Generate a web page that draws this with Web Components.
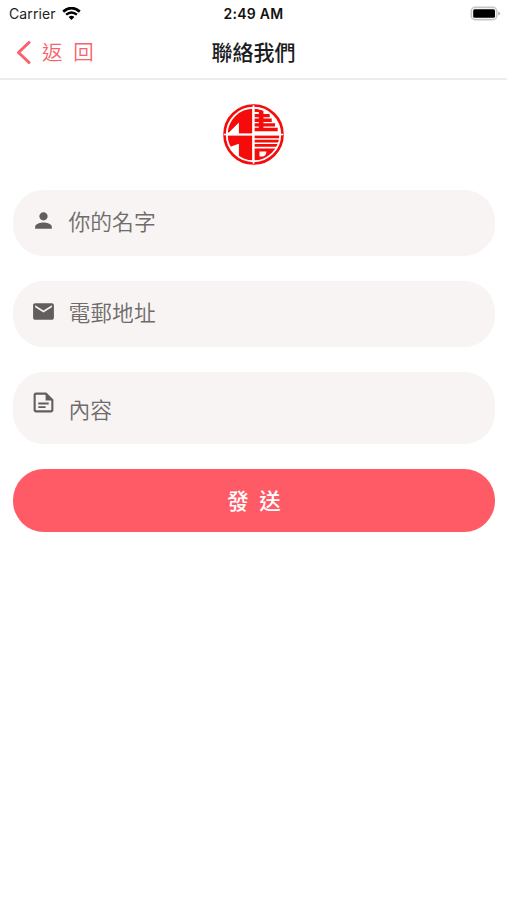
<!DOCTYPE html>
<html lang="zh-Hant">
<head>
<meta charset="utf-8">
<meta name="viewport" content="width=device-width, initial-scale=1">
<title>聯絡我們</title>
<style>
  body {
    margin: 0;
    background: #fff;
    font-family: Inter, "Noto Sans CJK TC", sans-serif;
  }
</style>
</head>
<body>
<contact-page>
  <status-bar carrier="Carrier" time="2:49 AM"></status-bar>
  <nav-bar><span slot="back">返 回</span>聯絡我們</nav-bar>
  <brand-logo></brand-logo>
  <form-field icon="person">你的名字</form-field>
  <form-field icon="mail">電郵地址</form-field>
  <form-field icon="note" multiline>內容</form-field>
  <submit-button>發 送</submit-button>
</contact-page>

<script>
class ContactPage extends HTMLElement {
  constructor() {
    super();
    this.attachShadow({ mode: "open" }).innerHTML = `
      <style>
        :host {
          display: flex;
          flex-direction: column;
          min-height: 100vh;
        }
      </style>
      <slot></slot>
    `;
  }
}

class StatusBar extends HTMLElement {
  constructor() {
    super();
    this.attachShadow({ mode: "open" }).innerHTML = `
      <style>
        :host {
          display: grid;
          grid-template-columns: 1fr auto 1fr;
          align-items: center;
          height: 27px;
          padding: 0 6px 0 9px;
          box-sizing: border-box;
          font-size: 14px;
          line-height: 27px;
          color: #222;
        }
        .left { display: flex; align-items: center; gap: 6px; }
        .carrier { letter-spacing: 0.1px; }
        .time {
          margin-right: 3px;
          font-size: 14px;
          font-weight: 600;
          color: #111;
          letter-spacing: 0.25px;
        }
        .battery { justify-self: end; }
        svg { display: block; }
      </style>
      <div class="left">
        <span class="carrier">${this.getAttribute("carrier")}</span>
        <svg width="19" height="14" viewBox="0 0 19 14" fill="none" stroke="#000">
          <path d="M1.2 4.6Q9.5-2.4 17.8 4.6" stroke-width="2.7"/>
          <path d="M4.1 7.7Q9.5 3.1 14.9 7.7" stroke-width="2.4"/>
          <path d="M6.6 10Q9.5 7.4 12.4 10L9.5 13Z" fill="#000" stroke="none"/>
        </svg>
      </div>
      <span class="time">${this.getAttribute("time")}</span>
      <svg class="battery" width="31" height="16" viewBox="0 0 31 16">
        <rect x="1.2" y="1.3" width="25.6" height="12.4" rx="4" fill="#f4f4f4" stroke="#c6c6c6" stroke-width="1.4"/>
        <rect x="3.2" y="3.2" width="21.8" height="8.6" rx="1.5" fill="#000"/>
        <path d="M28.2 5.4q2 .6 2 2.1t-2 2.1z" fill="#b4b4b4"/>
      </svg>
    `;
  }
}

class NavBar extends HTMLElement {
  constructor() {
    super();
    this.attachShadow({ mode: "open" }).innerHTML = `
      <style>
        :host {
          display: grid;
          grid-template-columns: 1fr auto 1fr;
          align-items: center;
          height: 53px;
          padding: 0 15px 0;
          box-sizing: border-box;
          border-bottom: 2px solid #ededed;
        }
        .back {
          display: flex;
          align-items: center;
          gap: 11px;
          color: #f9616b;
          font-size: 20.5px;
          line-height: 30px;
          font-weight: 350;
          word-spacing: 5px;
        }
        .title {
          font-size: 21px;
          line-height: 30px;
          font-weight: 500;
          color: #1c1c1e;
        }
        svg { display: block; }
      </style>
      <div class="back">
        <svg width="16" height="24" viewBox="0 0 16 24" fill="none" stroke="currentColor" stroke-width="3" stroke-linecap="round" stroke-linejoin="round">
          <path d="M14 1.5L3.5 11.5L14 21.5"/>
        </svg>
        <slot name="back"></slot>
      </div>
      <div class="title"><slot></slot></div>
    `;
  }
}

class BrandLogo extends HTMLElement {
  constructor() {
    super();
    this.attachShadow({ mode: "open" }).innerHTML = `
      <style>
        :host {
          display: flex;
          justify-content: center;
          padding: 24px 0 25px;
        }
        svg { display: block; }
      </style>
      <svg width="61" height="61" viewBox="30 26 184 184">
        <clipPath id="disc"><circle cx="122" cy="118" r="78"/></clipPath>
        <circle cx="122" cy="118" r="87.5" fill="#fff" stroke="#f60b0b" stroke-width="8"/>
        <g fill="#f60b0b" clip-path="url(#disc)">
          <!-- left half -->
          <path d="M118 38V115H78V82L48 112H40V38Z"/>
          <path d="M118 121V200H78V146L50 156H40V121Z"/>
          <!-- right half -->
          <path d="M125 38L152 46V106H138V50H125Z"/>
          <path d="M125 56h46v10h-46zM125 70h52v10h-52zM125 84h62v10h-62zM125 98h70v10h-70z"/>
          <path d="M125 121h76v8h-76zM125 134h74v8h-74zM125 147h70v8h-70z"/>
          <path fill-rule="evenodd" d="M125 160H190V200H125ZM140 169V184H150Q160 182 161 169Z"/>
        </g>
        <path d="M32 118H212" stroke="#fff" stroke-width="5"/>
        <path d="M122 30V206" stroke="#fff" stroke-width="5"/>
      </svg>
    `;
  }
}

const FIELD_ICONS = {
  person: `<path d="M12 12c2.21 0 4-1.79 4-4s-1.79-4-4-4-4 1.79-4 4 1.79 4 4 4zm0 2c-2.67 0-8 1.34-8 4v2h16v-2c0-2.66-5.33-4-8-4z"/>`,
  mail: `<path d="M20 4H4c-1.1 0-1.99.9-1.99 2L2 18c0 1.1.9 2 2 2h16c1.1 0 2-.9 2-2V6c0-1.1-.9-2-2-2zm0 4l-8 5-8-5V6l8 5 8-5v2z"/>`,
  note: `<path fill="none" stroke="currentColor" stroke-width="2" stroke-linejoin="round" d="M5 3.5H14.5L20.500 9.500V19Q20.500 20.500 19 20.500H5Q3.500 20.500 3.500 19V5Q3.500 3.500 5 3.500Z"/>
         <path d="M14 3.5L20.5 10H14ZM7 12h10v1.8H7zM7 15.5h7v1.8H7z"/>`,
};

class FormField extends HTMLElement {
  constructor() {
    super();
    this.attachShadow({ mode: "open" }).innerHTML = `
      <style>
        :host {
          display: flex;
          align-items: flex-start;
          gap: 12.5px;
          height: 66px;
          margin: 0 12px 25px 13px;
          padding: 17.5px 18px 0;
          box-sizing: border-box;
          border-radius: 31px;
          background: #f7f4f3;
          color: #6f6b6a;
        }
        :host([multiline]) {
          height: 72px;
        }
        svg {
          display: block;
          flex: none;
          color: #625e5d;
          fill: currentColor;
        }
        .label {
          font-size: 21.8px;
          line-height: 28px;
          font-weight: 350;
        }
        :host([multiline]) .label {
          margin-top: 6px;
        }
      </style>
      <svg width="25" height="25" viewBox="0 0 24 24">${FIELD_ICONS[this.getAttribute("icon")]}</svg>
      <div class="label"><slot></slot></div>
    `;
  }
}

class SubmitButton extends HTMLElement {
  constructor() {
    super();
    this.attachShadow({ mode: "open" }).innerHTML = `
      <style>
        :host {
          display: flex;
          justify-content: center;
          align-items: center;
          height: 63px;
          margin: 0 12px 0 13px;
          border-radius: 31px;
          background: #ff5b66;
          color: #fff;
          font-size: 21.5px;
          line-height: 30px;
          font-weight: 500;
          word-spacing: 5px;
          cursor: pointer;
        }
      </style>
      <slot></slot>
    `;
  }
}

customElements.define("contact-page", ContactPage);
customElements.define("status-bar", StatusBar);
customElements.define("nav-bar", NavBar);
customElements.define("brand-logo", BrandLogo);
customElements.define("form-field", FormField);
customElements.define("submit-button", SubmitButton);
</script>
</body>
</html>
